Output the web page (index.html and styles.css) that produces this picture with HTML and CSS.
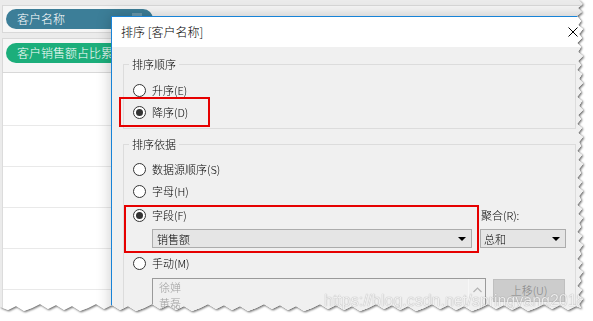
FILE: index.html
```html
<!DOCTYPE html>
<html lang="zh-CN">
<head>
<meta charset="utf-8">
<title>排序</title>
<link rel="stylesheet" href="styles.css">
</head>
<body>
<div class="shot">
  <div class="paper">
    <div class="left">
      <div class="topstrip"></div>
      <div class="shelf shelf-cols">
        <span class="pill pill-blue">客户名称<i class="pill-caret"></i></span>
      </div>
      <div class="shelf shelf-rows">
        <span class="pill pill-green">客户销售额占比累计</span>
      </div>
      <div class="rows">
        <div class="grow first"></div>
        <div class="grow"></div>
        <div class="grow"></div>
        <div class="grow"></div>
        <div class="grow"></div>
        <div class="grow"></div>
      </div>
    </div>

    <div class="dialog">
      <div class="titlebar">
        <span class="title">排序 [客户名称]</span>
        <span class="close">
          <svg width="10" height="10" viewBox="0 0 10 10"><path d="M0.5 0.5 L9.5 9.5 M9.5 0.5 L0.5 9.5" stroke="#000" stroke-width="1" fill="none"/></svg>
        </span>
      </div>
      <div class="dbody">
        <fieldset class="group g1">
          <legend>排序顺序</legend>
          <div class="radio"><span class="rb"></span>升序(E)</div>
          <div class="radio"><span class="rb on"></span>降序(D)</div>
        </fieldset>

        <fieldset class="group g2">
          <legend>排序依据</legend>
          <div class="radio"><span class="rb"></span>数据源顺序(S)</div>
          <div class="radio"><span class="rb"></span>字母(H)</div>
          <div class="field-grid">
            <div class="radio"><span class="rb on"></span>字段(F)</div>
            <div class="agg-label">聚合(R):</div>
            <div class="select sel-field"><span>销售额</span><i class="tri"></i></div>
            <div class="select sel-agg"><span>总和</span><i class="tri"></i></div>
          </div>
          <div class="radio"><span class="rb"></span>手动(M)</div>
          <div class="manual">
            <div class="listbox">
              <div class="items">
                <div class="item">徐婵</div>
                <div class="item">黄磊</div>
              </div>
              <div class="vscroll">
                <svg width="9" height="6" viewBox="0 0 9 6"><path d="M0.5 5 L4.5 1 L8.5 5" stroke="#b4b4b4" stroke-width="1.2" fill="none"/></svg>
              </div>
            </div>
            <div class="btn">上移(U)</div>
          </div>
        </fieldset>

        <div class="mark mark1"></div>
        <div class="mark mark2"></div>
      </div>
    </div>

    <div class="watermark">https://blog.csdn.net/springyang2018</div>
  </div>
</div>
</body>
</html>
```

FILE: styles.css
```css
* { box-sizing: border-box; margin: 0; padding: 0; }
html, body { width: 593px; height: 321px; background: #fff; overflow: hidden; }
body {
  font-family: "Noto Sans CJK SC", "Noto Sans", sans-serif;
  font-size: 11px;
  font-weight: 300;
  color: #000;
}

.shot {
  width: 593px;
  height: 321px;
  filter: drop-shadow(1px 1px 1px rgba(0, 0, 0, 0.6));
}

.paper {
  width: 593px;
  height: 321px;
  position: relative;
  overflow: hidden;
  background: #fff;
  clip-path: polygon(
    0 0, 579px 0, 583px 4px, 578px 8px, 582px 12px, 577px 16px, 581px 21px, 578px 25px, 583px 29px,
    579px 34px, 582px 38px, 577px 43px, 581px 47px, 578px 52px, 583px 56px, 578px 61px, 581px 65px,
    577px 70px, 582px 74px, 579px 79px, 583px 83px, 578px 88px, 581px 92px, 577px 97px, 582px 101px,
    579px 106px, 583px 110px, 578px 115px, 581px 119px, 577px 124px, 582px 128px, 578px 133px,
    583px 137px, 579px 142px, 581px 146px, 577px 151px, 582px 155px, 578px 160px, 583px 164px,
    579px 169px, 581px 173px, 577px 178px, 582px 182px, 578px 187px, 583px 191px, 579px 196px,
    581px 200px, 577px 205px, 582px 209px, 578px 214px, 583px 218px, 579px 223px, 581px 227px,
    577px 232px, 582px 236px, 578px 241px, 583px 245px, 579px 250px, 581px 254px, 577px 259px,
    582px 263px, 578px 268px, 583px 272px, 579px 277px, 581px 281px, 577px 286px, 582px 290px,
    578px 295px, 583px 299px, 579px 304px, 581px 308px,
    576px 306px, 568px 310px, 560px 305px, 552px 309px, 544px 304px, 536px 308px, 528px 311px,
    520px 306px, 512px 310px, 504px 305px, 496px 309px, 488px 304px, 480px 308px, 472px 311px,
    464px 306px, 456px 310px, 448px 305px, 440px 309px, 432px 304px, 424px 308px, 416px 311px,
    408px 306px, 400px 310px, 392px 305px, 384px 309px, 376px 304px, 368px 308px, 360px 311px,
    352px 306px, 344px 310px, 336px 305px, 328px 309px, 320px 304px, 312px 308px, 304px 311px,
    296px 306px, 288px 310px, 280px 305px, 272px 309px, 264px 304px, 256px 308px, 248px 311px,
    240px 306px, 232px 310px, 224px 305px, 216px 309px, 208px 304px, 200px 308px, 192px 311px,
    184px 306px, 176px 310px, 168px 305px, 160px 309px, 152px 304px, 144px 308px, 136px 311px,
    128px 306px, 120px 310px, 112px 305px, 104px 309px, 96px 304px, 88px 308px, 80px 311px,
    72px 306px, 64px 310px, 56px 305px, 48px 309px, 40px 304px, 32px 308px, 24px 311px,
    16px 306px, 8px 310px, 0 307px
  );
}

/* ---------- left worksheet area ---------- */
.left {
  height: 100%;
  background: #ebebeb;
  padding-left: 2px;
  display: flex;
  flex-direction: column;
}
.topstrip { height: 5px; flex: none; }
.shelf {
  flex: none;
  background: #f6f6f6;
  border: 1px solid #d8d8d8;
  display: flex;
  align-items: flex-start;
  padding-left: 3px;
}
.shelf-cols { height: 28px; padding-top: 3px; }
.shelf-rows { height: 35px; margin-top: 5px; padding-top: 4px; }

.pill {
  display: flex;
  align-items: center;
  height: 20px;
  border-radius: 10px;
  padding-left: 11px;
  color: #fff;
  font-size: 12px;
  font-weight: 300;
  line-height: 20px;
  white-space: nowrap;
  position: relative;
}
.pill-blue { width: 147px; background: #3c7e98; }
.pill-green { width: 220px; background: #1cae7b; }
.pill-caret {
  position: absolute;
  left: 126px;
  top: 4px;
  width: 10px;
  height: 4px;
  background: #6a9aae;
}

.rows {
  flex: 1;
  background: #fff;
  border-left: 1px solid #dcdcdc;
}
.grow { height: 41px; border-bottom: 1px solid #e9e9e9; }
.grow.first { height: 53px; }

/* ---------- dialog ---------- */
.dialog {
  position: absolute;
  left: 111px;
  top: 16px;
  width: 486px;
  height: 330px;
  background: #f0f0f0;
  border: 1px solid #1883d7;
  box-shadow: 0 0 14px rgba(0, 0, 0, 0.22);
  display: flex;
  flex-direction: column;
}
.titlebar {
  flex: none;
  height: 30px;
  background: #fff;
  display: flex;
  align-items: center;
  padding-left: 9px;
}
.title { font-size: 12px; line-height: 16px; color: #000; }
.close {
  margin-left: auto;
  width: 46px;
  height: 30px;
  display: flex;
  align-items: center;
  justify-content: center;
}
.close svg { display: block; }

.dbody {
  position: relative;
  flex: 1;
  padding-left: 11px;
}

.group {
  width: 453px;
  border: 1px solid #dcdcdc;
  padding: 0 9px;
  min-width: 0;
}
.group legend {
  font-size: 11px;
  line-height: 16px;
  padding: 0 3px;
  margin-left: -4px;
  color: #000;
}
.g1 { margin-top: 9px; padding-top: 7px; padding-bottom: 5px; }
.g2 { margin-top: 7px; padding-top: 6px; padding-bottom: 40px; }

.radio {
  display: flex;
  align-items: center;
  height: 22px;
  line-height: 16px;
  white-space: nowrap;
}
.rb {
  flex: none;
  width: 13px;
  height: 13px;
  border: 1px solid #333;
  border-radius: 50%;
  background: #fff;
  margin-right: 6px;
  display: flex;
  align-items: center;
  justify-content: center;
}
.rb.on::after {
  content: "";
  width: 7px;
  height: 7px;
  border-radius: 50%;
  background: #333;
}

.field-grid {
  margin-top: 2px;
  display: grid;
  grid-template-columns: 339px 86px;
  column-gap: 8px;
  row-gap: 3px;
}
.agg-label {
  display: flex;
  align-items: center;
  height: 22px;
  line-height: 16px;
  padding-left: 1px;
}
.select {
  height: 19px;
  background: #e5e5e5;
  border: 1px solid #acacac;
  display: flex;
  align-items: center;
  padding-left: 3px;
  padding-right: 5px;
  line-height: 16px;
}
.select span { flex: 1; }
.sel-field { margin-left: 19px; padding-left: 4px; }
.tri {
  width: 0;
  height: 0;
  border-left: 4px solid transparent;
  border-right: 4px solid transparent;
  border-top: 4px solid #000;
}
.field-grid + .radio { margin-top: 4px; }

.manual {
  display: flex;
  align-items: flex-start;
  margin-top: 4px;
  padding-left: 19px;
  gap: 7px;
}
.listbox {
  width: 334px;
  height: 60px;
  border: 1px solid #9a9a9a;
  background: #f0f0f0;
  display: flex;
}
.items { flex: 1; padding-top: 0; padding-left: 6px; }
.item { height: 16px; line-height: 16px; color: #a0a0a0; }
.vscroll {
  width: 17px;
  border-left: 1px solid #f7f7f7;
  display: flex;
  justify-content: center;
  padding-top: 8px;
}
.vscroll svg { display: block; }
.btn {
  margin-top: 1px;
  width: 72px;
  height: 23px;
  background: #cccccc;
  border: 1px solid #bfbfbf;
  color: #838383;
  display: flex;
  align-items: flex-start;
  justify-content: center;
  padding-top: 2px;
  line-height: 16px;
}

/* red annotation boxes */
.mark {
  position: absolute;
  border: 2px solid #e60000;
}
.mark1 { left: 7px; top: 50px; width: 91px; height: 30px; }
.mark2 { left: 12px; top: 158px; width: 355px; height: 48px; }

.watermark {
  position: absolute;
  left: 324px;
  top: 291px;
  font-family: "Liberation Sans", Arial, sans-serif;
  font-size: 16px;
  line-height: 20px;
  color: rgba(255, 255, 255, 0.85);
  text-shadow: 0 0 1px rgba(0, 0, 0, 0.45);
  white-space: nowrap;
}
```
